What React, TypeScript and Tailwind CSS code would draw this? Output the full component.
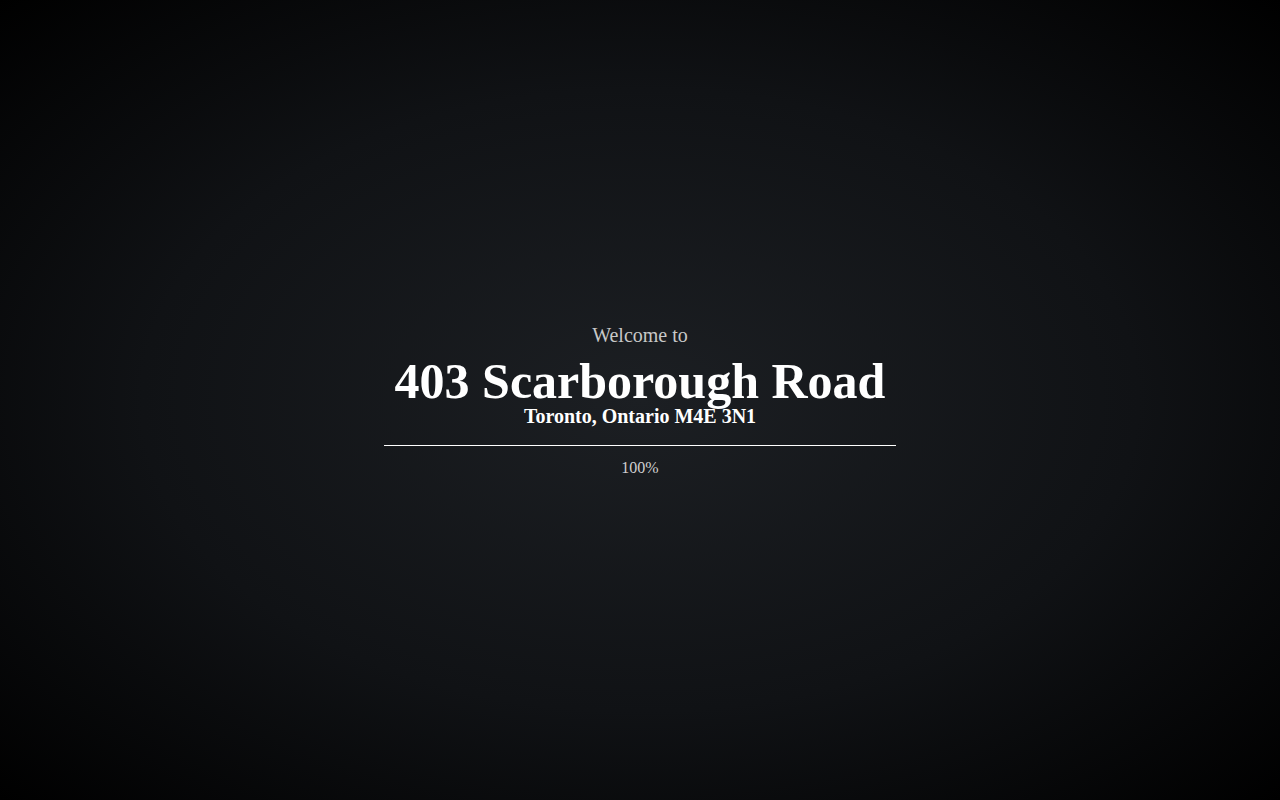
export default function App() {
  return (
    <div
      className="h-screen w-full flex items-center justify-center bg-[radial-gradient(ellipse_at_center,#1c1f23_0%,#101215_55%,#000000_100%)] text-white"
      style={{ fontFamily: '"Liberation Serif", "Times New Roman", serif' }}
    >
      <div className="flex flex-col items-center">
        <p className="text-[20px] leading-[24px] text-[#c8c8c8]">Welcome to</p>
        <h1 className="text-[50px] leading-[48px] font-bold mt-[10px]">403 Scarborough Road</h1>
        <h2 className="text-[20px] leading-[22px] font-bold">Toronto, Ontario M4E 3N1</h2>
        <div className="w-[512px] h-px bg-white mt-[18px]" />
        <p className="text-[16px] leading-[20px] text-[#d0d0d0] mt-[12px]">100%</p>
      </div>
    </div>
  );
}
